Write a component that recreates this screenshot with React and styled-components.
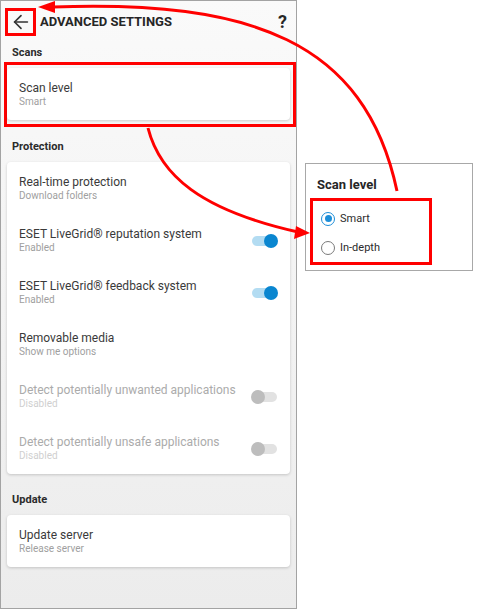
import React from 'react';
import styled, { createGlobalStyle } from 'styled-components';
import { ArrowLeft } from 'lucide-react';

const GlobalStyle = createGlobalStyle`
    html, body {
        margin: 0;
        padding: 0;
        background: #ffffff;
    }
    body {
        font-family: Roboto, "Noto Sans", "Liberation Sans", sans-serif;
    }
`;

const Page = styled.div`
    position: relative;
    width: 480px;
    height: 609px;
    display: flex;
    flex-direction: row;
    overflow: hidden;
`;

const Phone = styled.div`
    width: 297px;
    height: 609px;
    box-sizing: border-box;
    border: 1px solid #a3a3a3;
    background: linear-gradient(#fafafa, #ececec);
    display: flex;
    flex-direction: column;
`;

const Header = styled.div`
    height: 40px;
    display: flex;
    flex-direction: row;
    align-items: center;
    padding: 0 9px 0 4px;
    box-sizing: border-box;
`;

const BackButton = styled.div`
    width: 31px;
    height: 28px;
    box-sizing: border-box;
    border: 3px solid #ff0000;
    display: flex;
    align-items: center;
    justify-content: center;
    color: #333;
    margin-top: 2px;
`;

const Title = styled.div`
    flex: 1;
    margin-left: 4px;
    font-size: 13px;
    font-weight: bold;
    color: #262626;
`;

const Help = styled.div`
    font-size: 18px;
    font-weight: bold;
    color: #262626;
`;

const SectionLabel = styled.div`
    margin-top: ${p => p.$top}px;
    padding-left: 11px;
    height: 14px;
    line-height: 14px;
    font-size: 11px;
    font-weight: bold;
    color: #2b2b2b;
`;

const Highlight = styled.div`
    margin: 2px 0 0 3px;
    width: 292px;
    box-sizing: border-box;
    border: 3px solid #ff0000;
    padding: 3px 3px 4px 0;
`;

const Card = styled.div`
    margin: ${p => (p.$plain ? '0' : '8px 6px 0 6px')};
    background: #ffffff;
    border-radius: 4px;
    box-shadow: 0 1px 3px rgba(0, 0, 0, 0.18);
`;

const Row = styled.div`
    height: 52px;
    display: flex;
    flex-direction: row;
    align-items: center;
    justify-content: space-between;
    padding: 1px 12px 0 12px;
    box-sizing: border-box;
`;

const RowText = styled.div`
    display: flex;
    flex-direction: column;
`;

const RowTitle = styled.div`
    font-size: 12px;
    line-height: 14px;
    color: ${p => (p.$disabled ? '#ababab' : '#3a3a3a')};
`;

const RowSub = styled.div`
    font-size: 10px;
    line-height: 13px;
    color: ${p => (p.$disabled ? '#cfcfcf' : '#a0a0a0')};
`;

const Toggle = styled.div`
    position: relative;
    width: 27px;
    height: 14px;
    flex-shrink: 0;
`;

const Track = styled.div`
    position: absolute;
    left: 1px;
    right: 1px;
    top: 2px;
    height: 10px;
    border-radius: 5px;
    background: ${p => (p.$on ? '#b3dcf2' : '#e2e2e2')};
`;

const Thumb = styled.div`
    position: absolute;
    top: 0;
    ${p => (p.$on ? 'right: 0;' : 'left: 0;')}
    width: 14px;
    height: 14px;
    border-radius: 50%;
    background: ${p => (p.$on ? '#0a86d0' : '#bdbdbd')};
`;

const Side = styled.div`
    flex: 1;
    padding: 163px 0 0 8px;
`;

const Dialog = styled.div`
    width: 168px;
    height: 108px;
    box-sizing: border-box;
    border: 1px solid #a8a8a8;
    background: #ffffff;
    padding-top: 13px;
`;

const DialogTitle = styled.div`
    padding-left: 11px;
    height: 16px;
    line-height: 16px;
    font-size: 13px;
    font-weight: bold;
    color: #262626;
`;

const Options = styled.div`
    margin: 5px 0 0 4px;
    width: 122px;
    box-sizing: border-box;
    border: 3px solid #ff0000;
    padding: 3px 0 0 8px;
`;

const Option = styled.div`
    height: 29px;
    display: flex;
    flex-direction: row;
    align-items: center;
    font-size: 11px;
    color: #2b2b2b;
`;

const Radio = styled.div`
    width: 14px;
    height: 14px;
    box-sizing: border-box;
    border-radius: 50%;
    border: 1.5px solid ${p => (p.$checked ? '#1d8ed8' : '#7a7a7a')};
    display: flex;
    align-items: center;
    justify-content: center;
    margin-right: 5px;
    &::after {
        content: '';
        width: 7px;
        height: 7px;
        border-radius: 50%;
        background: ${p => (p.$checked ? '#1d8ed8' : 'transparent')};
    }
`;

const Overlay = styled.svg`
    position: absolute;
    left: 0;
    top: 0;
    pointer-events: none;
`;

const protection = [
    { title: 'Real-time protection', sub: 'Download folders' },
    { title: 'ESET LiveGrid® reputation system', sub: 'Enabled', toggle: true, on: true },
    { title: 'ESET LiveGrid® feedback system', sub: 'Enabled', toggle: true, on: true },
    { title: 'Removable media', sub: 'Show me options' },
    { title: 'Detect potentially unwanted applications', sub: 'Disabled', toggle: true, disabled: true },
    { title: 'Detect potentially unsafe applications', sub: 'Disabled', toggle: true, disabled: true },
];

const SettingRow = ({ title, sub, toggle, on, disabled }) => (
    <Row>
        <RowText>
            <RowTitle $disabled={disabled}>{title}</RowTitle>
            <RowSub $disabled={disabled}>{sub}</RowSub>
        </RowText>
        {toggle && (
            <Toggle>
                <Track $on={on} />
                <Thumb $on={on} />
            </Toggle>
        )}
    </Row>
);

export default function App() {
    return (
        <Page>
            <GlobalStyle />
            <Phone>
                <Header>
                    <BackButton>
                        <ArrowLeft size={22} strokeWidth={1.8} />
                    </BackButton>
                    <Title>ADVANCED SETTINGS</Title>
                    <Help>?</Help>
                </Header>

                <SectionLabel $top={5}>Scans</SectionLabel>
                <Highlight>
                    <Card $plain>
                        <SettingRow title="Scan level" sub="Smart" />
                    </Card>
                </Highlight>

                <SectionLabel $top={13}>Protection</SectionLabel>
                <Card>
                    {protection.map(p => (
                        <SettingRow key={p.title} {...p} />
                    ))}
                </Card>

                <SectionLabel $top={19}>Update</SectionLabel>
                <Card>
                    <SettingRow title="Update server" sub="Release server" />
                </Card>
            </Phone>

            <Side>
                <Dialog>
                    <DialogTitle>Scan level</DialogTitle>
                    <Options>
                        <Option><Radio $checked />Smart</Option>
                        <Option><Radio />In-depth</Option>
                    </Options>
                </Dialog>
            </Side>

            <Overlay width="480" height="609" viewBox="0 0 480 609">
                <path d="M 397 191 C 365 40, 250 0, 53 7" fill="none" stroke="#ff0000" strokeWidth="3" />
                <polygon points="38,7 55,1 55,13" fill="#ff0000" />
                <path d="M 148 128 C 160 175, 200 210, 298 232" fill="none" stroke="#ff0000" strokeWidth="3" />
                <polygon points="310,233 296,226 294,239" fill="#ff0000" />
            </Overlay>
        </Page>
    );
}
